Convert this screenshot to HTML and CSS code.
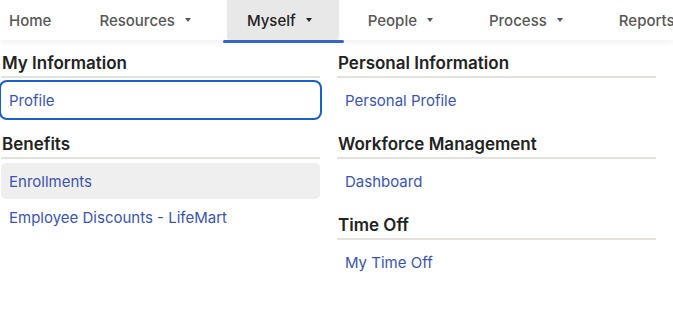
FILE: index.html
```html
<!DOCTYPE html>
<html lang="en">
<head>
  <meta charset="UTF-8">
  <title>Myself</title>
  <link rel="stylesheet" href="styles.css">
</head>
<body>
  <!-- Top navigation -->
  <nav class="topnav">
    <a class="nav-item nav-home">Home</a>
    <a class="nav-item">Resources <span class="caret"></span></a>
    <a class="nav-item active">Myself <span class="caret"></span></a>
    <a class="nav-item">People <span class="caret"></span></a>
    <a class="nav-item">Process <span class="caret"></span></a>
    <a class="nav-item">Reports <span class="caret"></span></a>
  </nav>

  <!-- Myself menu -->
  <div class="menu">
    <div class="menu-col">
      <h3 class="menu-heading">My Information</h3>
      <a class="menu-link focused">Profile</a>

      <h3 class="menu-heading">Benefits</h3>
      <a class="menu-link hovered">Enrollments</a>
      <a class="menu-link">Employee Discounts - LifeMart</a>
    </div>

    <div class="menu-col">
      <h3 class="menu-heading">Personal Information</h3>
      <a class="menu-link">Personal Profile</a>

      <h3 class="menu-heading">Workforce Management</h3>
      <a class="menu-link">Dashboard</a>

      <h3 class="menu-heading">Time Off</h3>
      <a class="menu-link">My Time Off</a>
    </div>
  </div>
</body>
</html>
```

FILE: styles.css
```css
html, body {
  overflow: hidden;
}

body {
  margin: 0;
  padding: 0;
  font-family: Inter, "Noto Sans", sans-serif;
  background: #fff;
  color: #222;
}

.topnav {
  display: flex;
  gap: 9px;
  height: 40px;
  background: #fff;
  box-shadow: 0 3px 5px rgba(0, 0, 0, 0.05);
  white-space: nowrap;
  position: relative;
  z-index: 1;
}

.nav-item {
  position: relative;
  display: flex;
  align-items: center;
  flex-shrink: 0;
  padding: 0 27px 0 20px;
  font-size: 15px;
  font-weight: 500;
  color: #575757;
  cursor: pointer;
}

.nav-home {
  padding: 0 19px 0 9px;
}

.nav-item.active {
  background: #e8e8e8;
  color: #222;
  border-radius: 0 0 3px 3px;
}

.nav-item.active::after {
  content: "";
  position: absolute;
  left: -4px;
  right: -5px;
  top: 40px;
  height: 3px;
  border-radius: 2px;
  background: #3e62c2;
}

.caret {
  display: inline-block;
  margin-left: 10px;
  border-left: 3.5px solid transparent;
  border-right: 3.5px solid transparent;
  border-top: 4px solid currentColor;
}

.menu {
  display: grid;
  grid-template-columns: repeat(2, 321px);
  column-gap: 15px;
  padding-top: 13px;
}

.menu-col {
  display: flex;
  flex-direction: column;
}

.menu-heading {
  margin: 16px 1px 4px 1px;
  padding: 0 0 3px 1px;
  font-size: 17px;
  line-height: 20px;
  font-weight: 600;
  color: #222;
  border-bottom: 2px solid #e4e0db;
}

.menu-heading:first-child {
  margin-top: 0;
}

.menu-link {
  display: flex;
  align-items: center;
  height: 36px;
  padding: 0 9px;
  font-size: 15px;
  color: #3b55ad;
  border-radius: 5px;
  cursor: pointer;
}

.menu-link.hovered {
  background: #efefef;
  margin: 0 1px;
  padding-left: 8px;
}

.menu-link.focused {
  box-shadow: 0 0 0 2px #1a60c8;
  border-radius: 6px;
  margin: 0 1px;
  padding-left: 8px;
}
```
